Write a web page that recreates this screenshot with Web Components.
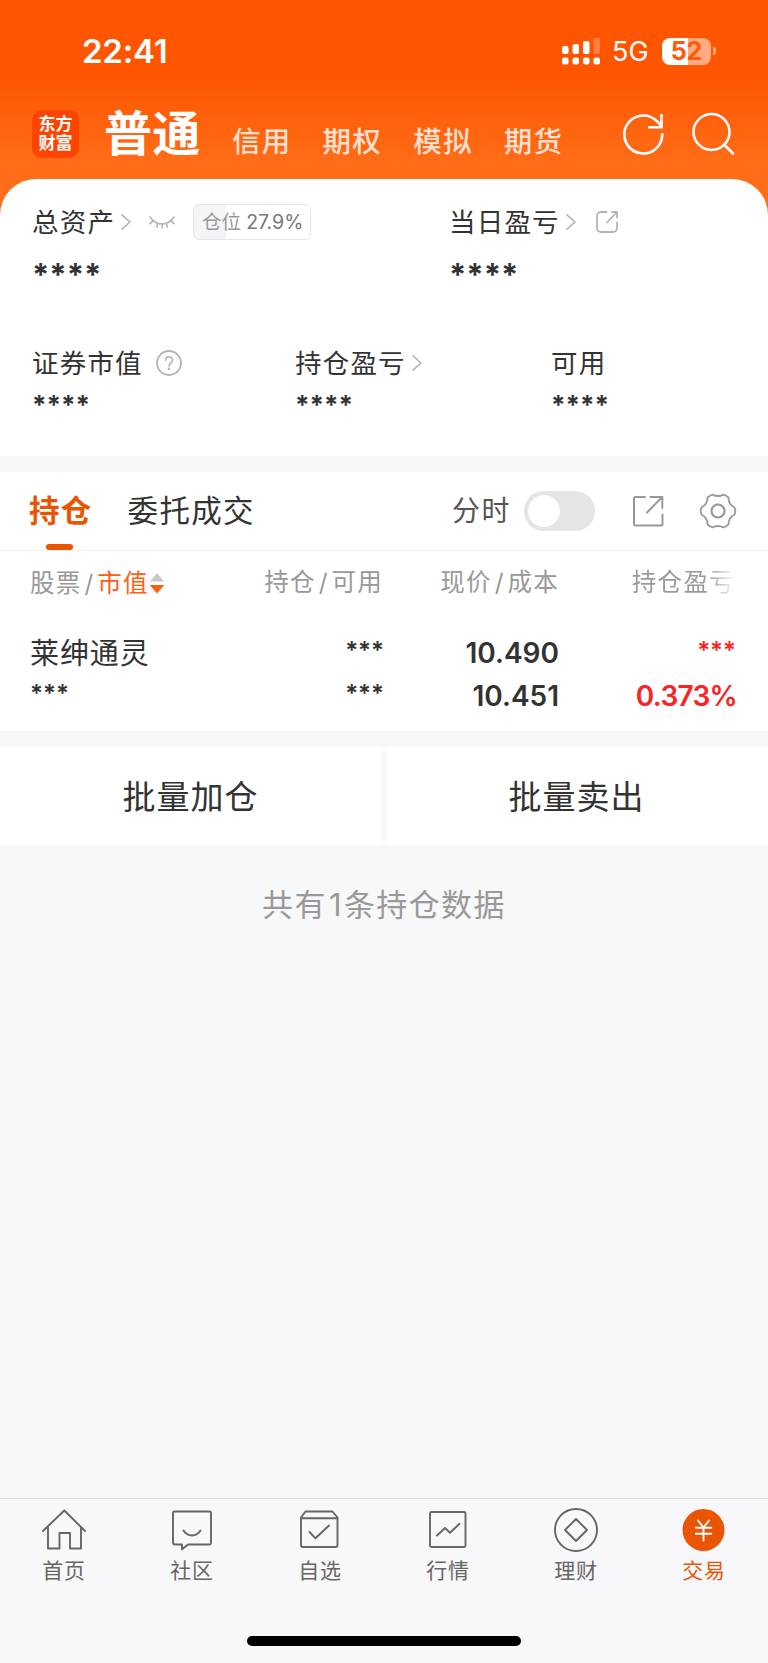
<!DOCTYPE html>
<html lang="zh-CN">
<head>
<meta charset="utf-8">
<meta name="viewport" content="width=device-width, initial-scale=1">
<title>交易</title>
<style>
  html, body{ margin: 0; height: 100%; }
  body{
    font-family: Inter, "Noto Sans CJK SC", sans-serif;
    background: #f7f8fa;
    color: #333;
    --c-prim: #ea5504;
  }
</style>
</head>
<body>
<trade-app></trade-app>

<script>
// Iconos: [viewBox, contenido]
const ICONS = {
  refresh: ['0 0 44 44', '<path d="M40.300 22.500A19 19 0 1 1 34.500 8.800L39.300 13.500M39.500 3.200V15.200H27.500" stroke-width="2.600" stroke-linecap="square" stroke-linejoin="miter"/>'],
  search: ['0 0 44 44', '<circle cx="20.500" cy="20" r="18"/><path d="M33 32.500l9 9"/>'],
  chevron: ['0 0 10 16', '<path d="M1 .8l8 7.200-8 7.200" stroke-width="1.600"/>'],
  eye: ['0 0 26 14', '<path d="M1 2c6 9.200 18 9.200 24 0M4.200 5.600L1 8.600M9 8.200l-1.200 3.800M13.200 9v4M17.200 8.200l1.200 3.800M21.800 5.600L25 8.600" stroke-width="1.600"/>'],
  help: ['0 0 26 26', '<circle cx="13" cy="13" r="12" stroke-width="1.800"/><path d="M9.600 10.200c0-4.600 6.900-4.600 6.900-.2 0 2.800-3.400 2.900-3.400 6" stroke-width="1.600"/><circle cx="13.100" cy="18.700" r="1.200" fill="currentColor" stroke="none"/>'],
  share: ['0 0 24 24', '<path d="M11.500 2H6a4 4 0 0 0-4 4v12a4 4 0 0 0 4 4h12a4 4 0 0 0 4-4v-5.500M17 2h5v5.500M21.500 2.500L12 12.500" stroke-width="1.800"/>'],
  export: ['0 0 32 32', '<path d="M13 2H3.500Q2 2 2 3.500V29q0 1.500 1.500 1.500H29q1.500 0 1.500-1.500V19.500M18.500 2H30.300V13M30 2.300L15 17.500" stroke-width="2"/>'],
  gear: ['0 0 36 36', '<path d="M12.500 1.600Q18 4.400 23.500 1.600Q25.500 1.800 28.400 4.500Q28.600 11.500 34.300 14.300Q36.300 18 34.300 21.700Q28.600 24.500 28.400 31.500Q25.500 34.200 23.500 34.400Q18 31.600 12.500 34.400Q10.500 34.200 7.600 31.500Q7.400 24.500 1.700 21.700Q-.3 18 1.700 14.300Q7.400 11.500 7.600 4.500Q10.500 1.800 12.500 1.600Z" stroke-width="1.800"/><circle cx="18" cy="18" r="6.500" stroke-width="2.200"/>'],
  sort: ['0 0 16 22', '<path d="M8 1l7 8.500H1z" fill="#c8c8c8" stroke="none"/><path d="M8 21.500L.7 13h14.600z" fill="#fa5f14" stroke="none"/>'],
  home: ['0 0 44 44', '<path d="M1 23L22.300 2.500 43 23M6 19v21.500h11.500V25H28v15.500h11V19" stroke-width="1.900"/>'],
  chat: ['0 0 44 44', '<path d="M4.500 3.500h35q1.500 0 1.500 1.500v30q0 1.500-1.500 1.500H18l-6 4.800v-4.800H5Q3 36.500 3 34.500V5q0-1.500 1.500-1.500z" stroke-width="1.900"/><path d="M13.500 22.500c4 6.500 13 6.500 17 0" stroke-width="2"/>'],
  pick: ['0 0 44 44', '<path d="M3 9.500L7.500 3.500h27L39.500 9.500V37q0 2-2 2h-32.500q-2 0-2-2V9.500M3 10.300h36" stroke-width="1.900"/><path d="M11.500 24l6 6.300L31 17.500" stroke-width="1.900"/>'],
  chart: ['0 0 44 44', '<rect x="4" y="4" width="35.500" height="35" rx="1.500" stroke-width="1.900"/><path d="M11 27.500l8-7.500 5 4.800 9.500-9" stroke-width="1.900"/>'],
  wealth: ['0 0 44 44', '<circle cx="22" cy="22" r="21" stroke-width="1.900"/><path d="M22 11l11 11-11 11-11-11z" stroke-width="1.900"/>'],
  trade: ['0 0 44 44', '<circle cx="21.500" cy="22" r="21" fill="currentColor" stroke="none"/><path d="M16 12.500l5.500 7 5.500-7M21.500 19.500v13M13.800 19.700h15.500M13.800 25.700h15.500" stroke="#fff" stroke-width="1.900"/>'],
};

class UiIcon extends HTMLElement {
  connectedCallback(){
    const [box, body] = ICONS[this.getAttribute('name')];
    const [, , w, h] = box.split(' ');
    this.attachShadow({mode:'open'}).innerHTML = `
      <style>
        :host{ display: block; flex: none; width: ${w}px; height: ${h}px; }
        svg{
          display: block; width: 100%; height: 100%; overflow: visible;
          fill: none; stroke: currentColor; stroke-width: 2.5;
          stroke-linecap: round; stroke-linejoin: round;
        }
      </style>
      <svg viewBox="${box}" aria-hidden="true">${body}</svg>`;
  }
}
customElements.define('ui-icon', UiIcon);

/** Crea un elemento a partir de su plantilla */
function define(name, html){
  const tpl = document.createElement('template');
  tpl.innerHTML = html;
  customElements.define(name, class extends HTMLElement {
    constructor(){
      super();
      this.attachShadow({mode:'open'}).appendChild(tpl.content.cloneNode(true));
    }
  });
}

define('status-bar', `
  <style>
    :host{ display: flex; height: 102px; box-sizing: border-box; padding: 0 52px 0 82px; align-items: center; }
    .time{ font-size: 33px; font-weight: 600; letter-spacing: -.2px; flex: 1; }
    .signal{ display: block; width: 38px; height: 27px; margin-right: 12px; }
    .net{ font-size: 27px; margin-right: 13px; width: 37px; padding-top: 1px; }
    .battery{
      width: 49px; height: 27px; border-radius: 8px;
      background: linear-gradient(90deg, #fff 53%, #ffaa80 53%);
      color: #ff5a08; font-size: 25px; font-weight: 700; line-height: 27px; text-align: center;
    }
    .nub{ width: 3px; height: 8px; margin-left: 2px; border-radius: 0 4px 4px 0; background: #ffaa80; }
  </style>
  <span class="time">22:41</span>
  <svg class="signal" viewBox="0 0 38 27" fill="#fff" aria-hidden="true">
    <rect x="0" y="8" width="6.500" height="8" rx="2"/><rect x="10.500" y="6" width="6.500" height="10" rx="2"/>
    <rect x="21" y="3" width="6.500" height="13" rx="2"/><rect x="31.500" y="0" width="6.500" height="16" rx="2" opacity=".25"/>
    <rect x="0" y="19.500" width="6.500" height="7" rx="2"/><rect x="10.500" y="19.500" width="6.500" height="7" rx="2"/>
    <rect x="21" y="19.500" width="6.500" height="7" rx="2"/><rect x="31.500" y="19.500" width="6.500" height="7" rx="2"/>
  </svg>
  <span class="net">5G</span>
  <div class="battery">52</div><div class="nub"></div>
`);

define('app-header', `
  <style>
    :host{
      display: block; height: 230px; color: #fff;
      background: linear-gradient(#ff5500 0, #ff5500 75px, #ff6d18 165px, #ff6d18);
    }
    nav{ display: flex; height: 64px; padding: 0 32px; align-items: center; }
    .logo{
      width: 47px; height: 48px; box-sizing: border-box; padding-top: 5px; border-radius: 10px;
      background: #ff4400; font-size: 17px; font-weight: 700; line-height: 19px; text-align: center;
    }
    .on{ font-size: 48px; font-weight: 700; line-height: 60px; margin-left: 25px; width: 128px; letter-spacing: .3px; white-space: nowrap; }
    .tab{
      font-size: 28.500px; font-weight: 500; line-height: 40px; letter-spacing: 1.200px;
      color: #ffe0d1; width: 90.600px; padding-top: 16px;
    }
    .tools{ display: flex; gap: 25px; margin-left: auto; margin-right: 1px; }
  </style>
  <status-bar></status-bar>
  <nav>
    <div class="logo">东方<br>财富</div>
    <div class="on">普通</div>
    <div class="tab">信用</div><div class="tab">期权</div><div class="tab">模拟</div><div class="tab">期货</div>
    <div class="tools"><ui-icon name="refresh"></ui-icon><ui-icon name="search"></ui-icon></div>
  </nav>
`);

// Etiqueta + valor oculto; el slot "extra" admite iconos
define('asset-item', `
  <style>
    :host{ display: block; --star: 31px; }
    .label{ display: flex; align-items: center; height: 40px; line-height: 39px; font-size: 26.500px; letter-spacing: 1.200px; white-space: nowrap; color: #333; }
    .value{ font-weight: 700; font-size: var(--star); line-height: 40px; height: 40px; margin-top: var(--value-top, 13px); }
    ::slotted(ui-icon){ color: #b4b4b4; }
  </style>
  <div class="label"><div><slot></slot></div><slot name="extra"></slot></div>
  <div class="value"><slot name="value">****</slot></div>
`);

define('position-badge', `
  <style>
    :host{
      display: flex; box-sizing: border-box; width: 118px; height: 36px; padding-left: 8px;
      align-items: center; gap: 5px; border: 1.500px solid #e6e6ea; border-radius: 6px;
      background: linear-gradient(90deg, #f5f5f9 27.900%, #fff 27.900%);
      font-size: 19.500px; line-height: 33px; letter-spacing: 0; color: #777;
    }
    span{ color: #999; }
  </style>
  <span>仓位</span><slot></slot>
`);

define('asset-panel', `
  <style>
    :host{
      display: block; box-sizing: border-box; height: 277px; margin-top: -51px; padding: 23px 32px 0;
      background: #fff; border-radius: 36px 36px 0 0;
    }
    .row{ display: grid; }
    .top{ grid-template-columns: 417px 1fr; }
    .bottom{ grid-template-columns: 263px 256px 1fr; margin-top: 48px; }
    .bottom asset-item{ --star: 26px; --value-top: 2px; }
    .arrow{ margin-left: 6px; }
  </style>
  <div class="row top">
    <asset-item>总资产
      <ui-icon slot="extra" class="arrow" name="chevron"></ui-icon>
      <ui-icon slot="extra" name="eye" style="margin-left:18px"></ui-icon>
      <position-badge slot="extra" style="margin-left:18px">27.9%</position-badge>
    </asset-item>
    <asset-item>当日盈亏
      <ui-icon slot="extra" class="arrow" name="chevron"></ui-icon>
      <ui-icon slot="extra" name="share" style="margin-left:19px"></ui-icon>
    </asset-item>
  </div>
  <div class="row bottom">
    <asset-item>证券市值<ui-icon slot="extra" name="help" style="margin-left:13px"></ui-icon></asset-item>
    <asset-item>持仓盈亏<ui-icon slot="extra" class="arrow" name="chevron"></ui-icon></asset-item>
    <asset-item>可用</asset-item>
  </div>
`);

define('toggle-switch', `
  <style>
    :host{ display: block; box-sizing: border-box; width: 71px; height: 40px; padding: 4px; border-radius: 20px; background: #e5e5e8; }
    i{ display: block; width: 32px; height: 32px; border-radius: 50%; background: #fff; }
  </style>
  <i></i>
`);

define('position-tabs', `
  <style>
    :host{
      display: flex; box-sizing: border-box; height: 79px; margin-top: 16px; padding: 0 32px 0 29px;
      align-items: center; background: #fff; border-bottom: 1px solid #f1f1f4;
    }
    .tab{ position: relative; font-size: 30.500px; line-height: 78px; letter-spacing: 1.300px; }
    .on{ color: var(--c-prim); font-weight: 700; margin-right: 35px; }
    .on::after{
      content: ""; position: absolute; left: 17px; bottom: 0; width: 27px; height: 6px;
      border-radius: 3px; background: var(--c-prim);
    }
    .time{ margin-left: auto; font-size: 28px; line-height: 78px; letter-spacing: 1.500px; color: #555; }
    toggle-switch{ margin: 0 37px 0 13px; }
    ui-icon{ color: #999; }
    [name="gear"]{ margin-left: 36px; }
  </style>
  <div class="tab on">持仓</div>
  <div class="tab">委托成交</div>
  <div class="time">分时</div>
  <toggle-switch></toggle-switch>
  <ui-icon name="export"></ui-icon>
  <ui-icon name="gear"></ui-icon>
`);

define('position-table', `
  <style>
    :host{ display: block; box-sizing: border-box; height: 180px; padding: 0 33px 0 30px; background: #fff; }
    .row{ display: grid; grid-template-columns: 160px 193px 176px 1fr; }
    .row > *{ text-align: right; white-space: nowrap; }
    .row > :first-child{ text-align: left; }
    .head{ height: 64px; line-height: 63px; font-size: 24.500px; letter-spacing: 1.300px; color: #999; }
    .head b{ font-weight: 400; color: #fa5f14; }
    .head i{ font-style: normal; padding: 0 2.500px 0 3px; }
    .head > :first-child{ display: flex; align-items: center; }
    .fade{ background: linear-gradient(90deg, #999 72%, #fff 101%); background-clip: text; -webkit-background-clip: text; color: transparent; }
    .line{ line-height: 43px; height: 43px; font-size: 28px; font-weight: 600; }
    .body{ padding-top: 17px; }
    .name{ font-size: 29px; font-weight: 400; letter-spacing: .9px; }
    .line .star{ font-size: 24px; line-height: 37px; margin-right: -1px; }
    .up{ color: #fa2323; }
    .rate{ letter-spacing: -.7px; margin-right: -2px; }
  </style>
  <div class="row head">
    <div>股票<i>/</i><b>市值</b><ui-icon name="sort"></ui-icon></div>
    <div>持仓<i>/</i>可用</div>
    <div>现价<i>/</i>成本</div>
    <div><span class="fade">持仓盈亏</span></div>
  </div>
  <div class="body">
    <div class="row line">
      <div class="name">莱绅通灵</div><div class="star">***</div><div>10.490</div><div class="star up">***</div>
    </div>
    <div class="row line">
      <div class="star">***</div><div class="star">***</div><div>10.451</div><div class="up rate">0.373%</div>
    </div>
  </div>
`);

define('batch-actions', `
  <style>
    :host{ display: grid; grid-template-columns: 1fr 1fr; gap: 4px; margin-top: 16px; }
    div{ height: 98px; line-height: 100px; background: #fff; text-align: center; font-size: 33px; letter-spacing: 1px; text-indent: -1px; }
  </style>
  <div>批量加仓</div>
  <div>批量卖出</div>
`);

define('nav-item', `
  <style>
    :host{ display: flex; flex-direction: column; align-items: center; color: #666; }
    :host([active]){ color: var(--c-prim); }
    span{ margin-top: 3px; font-size: 21px; line-height: 32px; letter-spacing: .8px; }
  </style>
  <slot name="icon"></slot>
  <span><slot></slot></span>
`);

define('bottom-nav', `
  <style>
    :host{ display: block; box-sizing: border-box; height: 165px; border-top: 1px solid #dedee1; background: #f8f8fb; }
    nav{ display: grid; grid-template-columns: repeat(6, 1fr); height: 137px; box-sizing: border-box; padding-top: 9px; }
    .bar{ width: 274px; height: 10px; margin: 0 auto; border-radius: 5px; background: #000; }
  </style>
  <nav>
    <nav-item><ui-icon slot="icon" name="home"></ui-icon>首页</nav-item>
    <nav-item><ui-icon slot="icon" name="chat"></ui-icon>社区</nav-item>
    <nav-item><ui-icon slot="icon" name="pick"></ui-icon>自选</nav-item>
    <nav-item><ui-icon slot="icon" name="chart"></ui-icon>行情</nav-item>
    <nav-item><ui-icon slot="icon" name="wealth"></ui-icon>理财</nav-item>
    <nav-item active><ui-icon slot="icon" name="trade"></ui-icon>交易</nav-item>
  </nav>
  <div class="bar"></div>
`);

define('trade-app', `
  <style>
    :host{ display: flex; flex-direction: column; height: 1663px; overflow: hidden; background: #f7f8fa; }
    .note{ margin-top: 40px; line-height: 40px; text-align: center; font-size: 31px; letter-spacing: 1.400px; color: #999; }
    .note span{ margin: 0 1px 0 2px; }
    bottom-nav{ margin-top: auto; }
  </style>
  <app-header></app-header>
  <asset-panel></asset-panel>
  <position-tabs></position-tabs>
  <position-table></position-table>
  <batch-actions></batch-actions>
  <div class="note">共有<span>1</span>条持仓数据</div>
  <bottom-nav></bottom-nav>
`);
</script>
</body>
</html>
